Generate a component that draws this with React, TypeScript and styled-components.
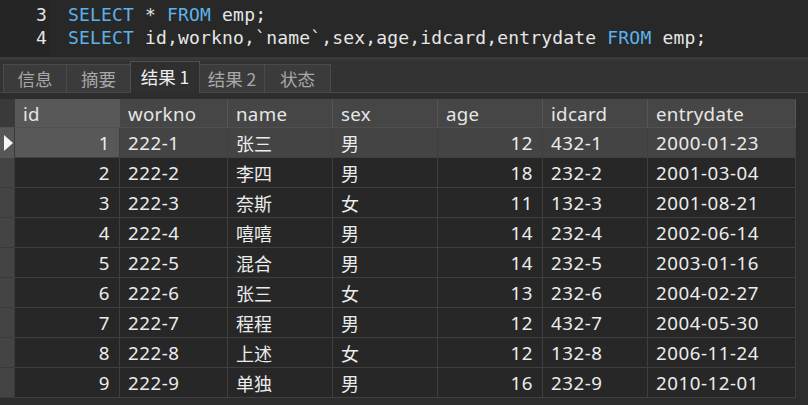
import React from "react";
import styled, { createGlobalStyle } from "styled-components";

const Global = createGlobalStyle`
  html, body { margin: 0; padding: 0; background: #2d2d2d; }
  body { width: 808px; height: 405px; overflow: hidden; }
  * { box-sizing: border-box; }
`;

const Page = styled.div`
  width: 808px;
  height: 405px;
  display: flex;
  flex-direction: column;
  background: #2d2d2d;
`;

const Editor = styled.div`
  display: flex;
  height: 60px;
  background: #282828;
  border-bottom: 3px solid #3a3a3a;
`;

const Gutter = styled.div`
  width: 50px;
  background: #252525;
  padding-top: 3px;
`;

const Code = styled.div`
  flex: 1;
  padding: 3px 0 0 18px;
`;

const Line = styled.div<{ $num?: boolean }>`
  height: 23px;
  line-height: 23px;
  font-family: "DejaVu Sans Mono", "Liberation Mono", monospace;
  font-size: 18px;
  letter-spacing: 0.17px;
  color: #e6e6e6;
  white-space: pre;
  text-align: ${(p) => (p.$num ? "right" : "left")};
  padding-right: ${(p) => (p.$num ? "3px" : "0")};
`;

const Kw = styled.span`
  color: #5db2ea;
`;

const TabBar = styled.div`
  height: 33px;
  background: #333333;
  border-bottom: 1px solid #484848;
  display: flex;
  align-items: flex-end;
  padding-left: 4px;
`;

const Tab = styled.div<{ $active?: boolean; $w: number }>`
  width: ${(p) => p.$w}px;
  height: ${(p) => (p.$active ? 32 : 29)}px;
  margin-bottom: -1px;
  background: ${(p) => (p.$active ? "#2f2f2f" : "#3b3b3b")};
  border: 1px solid ${(p) => (p.$active ? "#505050" : "#4a4a4a")};
  border-bottom: ${(p) => (p.$active ? "1px solid #2f2f2f" : "1px solid #484848")};
  margin-left: -1px;
  color: ${(p) => (p.$active ? "#f0f0f0" : "#a8a8a8")};
  font-family: "Noto Sans CJK SC", "Noto Sans", sans-serif;
  font-size: 17.5px;
  display: flex;
  align-items: center;
  justify-content: center;
  padding-bottom: ${(p) => (p.$active ? "2px" : "0")};
`;

const GridWrap = styled.div`
  padding-top: 6px;
  flex: 1;
`;

const Grid = styled.div`
  display: grid;
  grid-template-columns: 15px 105px 108px 105px 105px 105px 105px 148px;
  width: 796px;
  font-family: "Noto Sans", "Noto Sans CJK SC", sans-serif;
  font-size: 18.7px;
`;

const HeadCell = styled.div<{ $sel?: boolean; $corner?: boolean }>`
  height: 29px;
  background: ${(p) => (p.$corner ? "#3a3a3a" : p.$sel ? "#585858" : "#464646")};
  border-right: 1px solid #565656;
  border-bottom: 1px solid #505050;
  color: #e6e6e6;
  padding-left: 8px;
  display: flex;
  align-items: center;
  letter-spacing: 0.3px;
  ${(p) => (p.$corner ? "border-right: none;" : "")}
`;

const Indicator = styled.div<{ $cur?: boolean }>`
  height: 30px;
  background: ${(p) => (p.$cur ? "#575757" : "#444444")};
  border-bottom: 1px solid ${(p) => (p.$cur ? "#575757" : "#3a3a3a")};
  border-right: 1px solid #3a3a3a;
  display: flex;
  align-items: center;
  padding-left: 4px;
`;

const Cell = styled.div<{ $cur?: boolean; $sel?: boolean; $right?: boolean }>`
  height: 30px;
  background: ${(p) => (p.$cur ? (p.$sel ? "#585858" : "#444444") : "#272727")};
  border-right: 1px solid #3f3f3f;
  border-bottom: 1px solid #3f3f3f;
  color: #ececec;
  display: flex;
  align-items: center;
  justify-content: ${(p) => (p.$right ? "flex-end" : "flex-start")};
  padding: ${(p) => (p.$right ? "0 9px 0 0" : "0 0 0 8px")};
  white-space: nowrap;
  letter-spacing: 0.55px;
`;

const Cjk = styled.span`
  font-family: "Noto Sans CJK SC", sans-serif;
  font-size: 18px;
  letter-spacing: 0;
`;

const Arrow = () => (
  <svg width="10" height="16" viewBox="0 0 10 16">
    <path d="M0 0 L9 8 L0 16 Z" fill="#f4f4f4" />
  </svg>
);

const headers = ["id", "workno", "name", "sex", "age", "idcard", "entrydate"];

const rows: [string, string, string, string, string, string, string][] = [
  ["1", "222-1", "张三", "男", "12", "432-1", "2000-01-23"],
  ["2", "222-2", "李四", "男", "18", "232-2", "2001-03-04"],
  ["3", "222-3", "奈斯", "女", "11", "132-3", "2001-08-21"],
  ["4", "222-4", "嘻嘻", "男", "14", "232-4", "2002-06-14"],
  ["5", "222-5", "混合", "男", "14", "232-5", "2003-01-16"],
  ["6", "222-6", "张三", "女", "13", "232-6", "2004-02-27"],
  ["7", "222-7", "程程", "男", "12", "432-7", "2004-05-30"],
  ["8", "222-8", "上述", "女", "12", "132-8", "2006-11-24"],
  ["9", "222-9", "单独", "男", "16", "232-9", "2010-12-01"],
];

const rightCols = new Set([0, 4]);
const cjkCols = new Set([2, 3]);

const tabs: { label: string; w: number; active?: boolean }[] = [
  { label: "信息", w: 64 },
  { label: "摘要", w: 65 },
  { label: "结果 1", w: 70, active: true },
  { label: "结果 2", w: 66 },
  { label: "状态", w: 67 },
];

export default function App() {
  return (
    <Page>
      <Global />
      <Editor>
        <Gutter>
          <Line $num>3</Line>
          <Line $num>4</Line>
        </Gutter>
        <Code>
          <Line>
            <Kw>SELECT</Kw> * <Kw>FROM</Kw> emp;
          </Line>
          <Line>
            <Kw>SELECT</Kw> id,workno,`name`,sex,age,idcard,entrydate <Kw>FROM</Kw> emp;
          </Line>
        </Code>
      </Editor>
      <TabBar>
        {tabs.map((t) => (
          <Tab key={t.label} $w={t.w} $active={t.active}>
            {t.label}
          </Tab>
        ))}
      </TabBar>
      <GridWrap>
        <Grid>
          <HeadCell $corner />
          {headers.map((h, i) => (
            <HeadCell key={h} $sel={i === 0}>
              {h}
            </HeadCell>
          ))}
          {rows.map((r, ri) => (
            <React.Fragment key={ri}>
              <Indicator $cur={ri === 0}>{ri === 0 ? <Arrow /> : null}</Indicator>
              {r.map((v, ci) => (
                <Cell key={ci} $cur={ri === 0} $sel={ci === 0} $right={rightCols.has(ci)}>
                  {cjkCols.has(ci) ? <Cjk>{v}</Cjk> : v}
                </Cell>
              ))}
            </React.Fragment>
          ))}
        </Grid>
      </GridWrap>
    </Page>
  );
}
